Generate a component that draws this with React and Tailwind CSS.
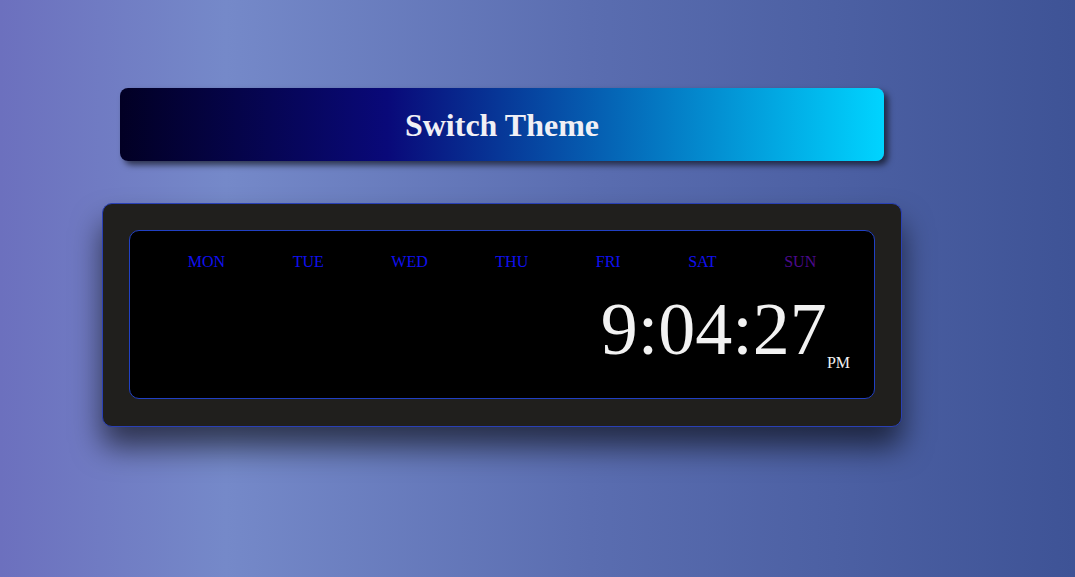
import React from "react";

const days = ["MON", "TUE", "WED", "THU", "FRI", "SAT", "SUN"];

const App = () => {
  return (
    <div
      className="min-h-[577px] w-full bg-[linear-gradient(90deg,#6c70be_0%,#7589c9_21%,#5a6db0_55%,#3e5396_100%)] pt-[88px]"
      style={{ fontFamily: '"Liberation Serif", "Times New Roman", serif' }}
    >
      <div className="ml-[102px] w-[800px]">
        {/* boton */}
        <button className="mx-[18px] block h-[73px] w-[764px] rounded-lg bg-[linear-gradient(90deg,#020024_0%,#090979_35%,#00d4ff_100%)] text-[32px] font-bold text-[#f0f0f5] shadow-[4px_4px_6px_rgba(0,0,0,0.6)]">
          Switch Theme
        </button>

        {/* reloj */}
        <div className="mt-[42px] rounded-[10px] border border-[#2a40b4] bg-[#201f1d] px-[26px] pt-[26px] pb-[27px] shadow-[0_20px_30px_rgba(0,0,0,0.6)]">
          <div className="rounded-[10px] border border-[#2140c4] bg-black px-6 pt-[22px] pb-[26px]">
            <div className="flex justify-around text-base leading-[1.15]">
              {days.map((d) => (
                <span
                  key={d}
                  className={d === "SUN" ? "text-[#4b0a8c]" : "text-[#1010f0]"}
                >
                  {d}
                </span>
              ))}
            </div>
            <div className="mt-4 flex items-end justify-end text-[#f2f2f2]">
              <span className="text-[74px] leading-[1.15]">9:04:27</span>
              <span className="text-base leading-[1.15]">PM</span>
            </div>
          </div>
        </div>
      </div>
    </div>
  );
};

export default App;
